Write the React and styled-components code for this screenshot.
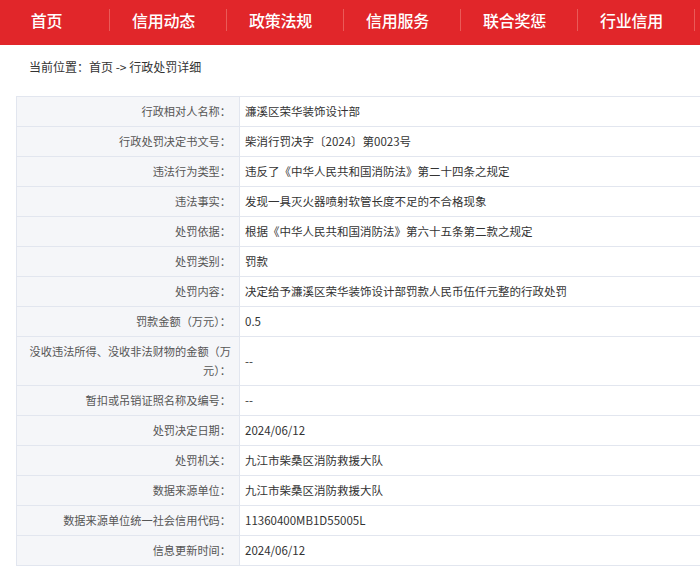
import styled, { createGlobalStyle } from 'styled-components';

const GlobalStyle = createGlobalStyle`
  html, body {
    margin: 0;
    padding: 0;
    background: #ffffff;
    overflow: hidden;
  }
  body {
    font-family: "Noto Sans CJK SC", "Noto Sans", sans-serif;
  }
`;

const navItems = ['首页', '信用动态', '政策法规', '信用服务', '联合奖惩', '行业信用'];

const rows = [
  ['行政相对人名称：', '濂溪区荣华装饰设计部'],
  ['行政处罚决定书文号：', '柴消行罚决字〔2024〕第0023号'],
  ['违法行为类型：', '违反了《中华人民共和国消防法》第二十四条之规定'],
  ['违法事实：', '发现一具灭火器喷射软管长度不足的不合格现象'],
  ['处罚依据：', '根据《中华人民共和国消防法》第六十五条第二款之规定'],
  ['处罚类别：', '罚款'],
  ['处罚内容：', '决定给予濂溪区荣华装饰设计部罚款人民币伍仟元整的行政处罚'],
  ['罚款金额（万元）：', '0.5'],
  ['没收违法所得、没收非法财物的金额（万元）：', '--'],
  ['暂扣或吊销证照名称及编号：', '--'],
  ['处罚决定日期：', '2024/06/12'],
  ['处罚机关：', '九江市柴桑区消防救援大队'],
  ['数据来源单位：', '九江市柴桑区消防救援大队'],
  ['数据来源单位统一社会信用代码：', '11360400MB1D55005L'],
  ['信息更新时间：', '2024/06/12'],
];

export default function App() {
  return (
    <StPage>
      <GlobalStyle />
      <StNav>
        {navItems.map((item) => (
          <StNavItem key={item}>{item}</StNavItem>
        ))}
      </StNav>
      <StCrumb>当前位置：首页&nbsp;-&gt;&nbsp;行政处罚详细</StCrumb>
      <StTable>
        {rows.map(([label, value]) => (
          <StRow key={label}>
            <StLabel>{label}</StLabel>
            <StValue>{value}</StValue>
          </StRow>
        ))}
      </StTable>
    </StPage>
  );
}

const StPage = styled.div`
  width: 700px;
  height: 574px;
  overflow: hidden;
`;

const StNav = styled.div`
  height: 45px;
  background: #e1262a;
  display: flex;
  margin-left: -7px;
  width: 760px;
`;

const StNavItem = styled.div`
  position: relative;
  width: 117px;
  flex: none;
  box-sizing: border-box;
  padding: 0 10px 5px 0;
  display: flex;
  align-items: center;
  justify-content: center;
  color: #ffffff;
  font-size: 16px;
  font-weight: 500;
  letter-spacing: -0.2px;

  &::after {
    content: '';
    position: absolute;
    right: 0;
    top: 9px;
    height: 22px;
    width: 1px;
    background: #ea5a58;
  }
`;

const StCrumb = styled.div`
  height: 43px;
  line-height: 43px;
  padding-left: 29px;
  font-size: 12px;
  color: #333333;
`;

const StTable = styled.div`
  margin: 8px 0 0 16px;
  width: 720px;
  border-top: 1px solid #e2e6ef;
  border-left: 1px solid #e2e6ef;
`;

const StRow = styled.div`
  display: flex;
  border-bottom: 1px solid #e2e6ef;
`;

const StLabel = styled.div`
  width: 223px;
  flex: none;
  box-sizing: border-box;
  padding: 5px 8px 5px 0;
  line-height: 19px;
  text-align: right;
  font-size: 11.2px;
  color: #555555;
  background: #f5f6f9;
  border-right: 1px solid #e2e6ef;
`;

const StValue = styled.div`
  flex: 1;
  display: flex;
  align-items: center;
  padding: 5px 5px;
  line-height: 19px;
  font-size: 11.5px;
  color: #333333;
`;
